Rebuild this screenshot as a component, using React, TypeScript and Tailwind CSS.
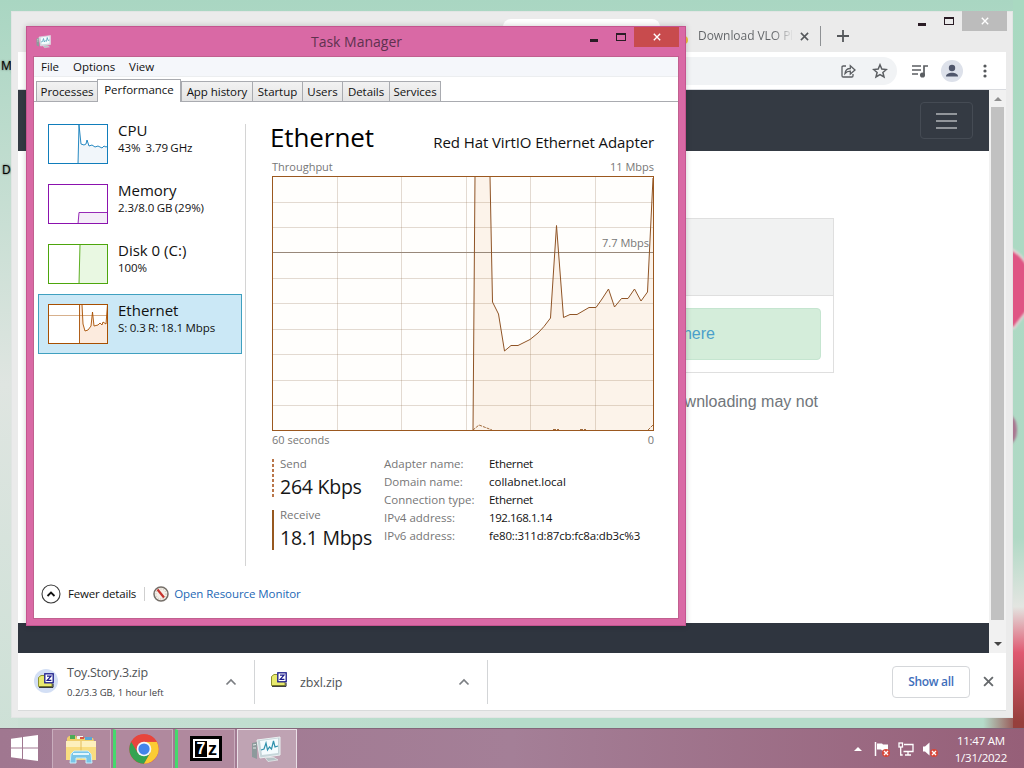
import type { ReactNode } from "react";

const THROUGHPUT =
  "201,254 203,0 218,0 220.5,126 226.5,138 232.5,175 239,169.5 246,169.5 258,163.5 266,157 272,150.5 278.5,142 284.5,49.5 291.5,141.5 298,138.5 305,138.5 317,131.5 324,131.5 330,123 336.5,113 342.5,131 349.5,122.5 356,122.5 362.5,113 369,125 375.5,116 381,2";

const tabs = [
  { name: "Processes", width: "w-[62px]" },
  { name: "Performance", width: "w-[84px]" },
  { name: "App history", width: "w-[72px]" },
  { name: "Startup", width: "w-[51px]" },
  { name: "Users", width: "w-[41px]" },
  { name: "Details", width: "w-[48px]" },
  { name: "Services", width: "w-[52px]" },
];

const adapterInfo = [
  { label: "Adapter name:", value: "Ethernet", spacing: "tracking-[-0.3px]" },
  { label: "Domain name:", value: "collabnet.local", spacing: "tracking-normal" },
  { label: "Connection type:", value: "Ethernet", spacing: "tracking-[-0.3px]" },
  { label: "IPv4 address:", value: "192.168.1.14", spacing: "tracking-[-0.45px]" },
  { label: "IPv6 address:", value: "fe80::311d:87cb:fc8a:db3c%3", spacing: "tracking-[-0.17px]" },
];

const resources = [
  {
    name: "CPU",
    detail: "43%  3.79 GHz",
    stroke: "#117dbb",
    fill: "#f1f6fa",
    points: "30,40 31,1 33,20 36,21 38,20 39,16 41,22 44,21 47,23 50,22 52,23 54,24 56,22 58,23 60,22",
  },
  {
    name: "Memory",
    detail: "2.3/8.0 GB (29%)",
    stroke: "#8b12ae",
    fill: "#f4ecf8",
    points: "30,40 31,28.5 60,28.5",
  },
  {
    name: "Disk 0 (C:)",
    detail: "100%",
    stroke: "#4da60c",
    fill: "#e9f8e2",
    points: "31,40 32,0.5 60,0.5",
  },
  {
    name: "Ethernet",
    detail: "S: 0.3 R: 18.1 Mbps",
    stroke: "#a74f01",
    fill: "#fcebde",
    points: "31.5,40 31.5,0.5 34,0.5 35,20 37,27 40,26 43,22 44.5,8 46,22 50,21 52,19 54,21 55,18 58,20 59.5,0.5",
    selected: true,
  },
];

function TaskManagerIcon({ className }: { className?: string }) {
  return (
    <svg viewBox="0 0 32 26" className={className}>
      <path d="M1 7l5-1v17l-5-2z" fill="#8d9a9c" />
      <path d="M2 9l3-.5M2 12h3" stroke="#e5eceb" />
      <path d="M6 4l23-3v18L9 22z" fill="#c6d6da" stroke="#eaf1f2" />
      <path d="M9 5l18-2.5v14.5L11 19z" fill="#f4fbfd" />
      <path d="M10 14l3-1 2-6 1.5 7 2-3 2 2 2-8 1.5 6 3-1" fill="none" stroke="#2f91ad" strokeWidth="1.2" />
      <path d="M14 21.5h9l4 2.5-10 1.5z" fill="#b5c3c6" stroke="#e8eeee" strokeWidth=".7" />
    </svg>
  );
}

function ZipIcon() {
  return (
    <svg viewBox="0 0 16 16" className="h-4 w-4">
      <path d="M.5 4.5L3 2.5h3l1 1h7v10H.5z" fill="#e8ea6e" stroke="#8d9130" />
      <path d="M1 14.3h14V11" fill="none" stroke="#111" />
      <rect x="6.8" y=".8" width="8.4" height="9" fill="#fff" stroke="#181889" strokeWidth="1.3" />
      <path d="M9 3.2h4L9.2 7.4h4.2" fill="none" stroke="#181889" strokeWidth="1.2" />
    </svg>
  );
}

function ChromeLogo() {
  return (
    <svg viewBox="0 0 48 48" className="h-[30px] w-[30px]">
      <circle cx="24" cy="24" r="23.5" fill="#e8453c" />
      <path d="M3.6 12.3A23.5 23.5 0 0 0 24 47.5l10.2-17.7L24 24H12z" fill="#34a351" />
      <path d="M44.4 12.3A23.5 23.5 0 0 1 24 47.5l10.2-17.7L24 12.3z" fill="#fbcc34" />
      <path d="M3.6 12.3A23.5 23.5 0 0 1 44.4 12.3H24L13.8 29.8z" fill="#e8453c" />
      <circle cx="24" cy="24" r="11.7" fill="#f5f7fb" />
      <circle cx="24" cy="24" r="9" fill="#4384ea" />
    </svg>
  );
}

function ExplorerIcon() {
  return (
    <svg viewBox="0 0 32 30" className="h-[30px] w-[32px]">
      <path d="M2 4l2-2h7l1 2h16l1 3v17H2z" fill="#efce6c" />
      <path d="M5 1h5v4H5z" fill="#4caa57" />
      <path d="M12 2h6v3h-6z" fill="#f7f5ed" />
      <path d="M15 3h4v2h-4z" fill="#d8554a" />
      <path d="M20 3h7v3h-7z" fill="#5ba6d4" />
      <path d="M1 7h30v19H1z" fill="#f9dd80" />
      <path d="M1 7h30v6H1z" fill="#fdf0bd" />
      <path d="M16 7v18" stroke="#e2bb59" />
      <path d="M5 29l1-9 3-3h14l3 3 1 9h-6v-5H11v5z" fill="#79c5e8" stroke="#caeefa" />
      <path d="M8 20h16" stroke="#e2f6fc" strokeWidth="2" />
    </svg>
  );
}

function Chevron() {
  return (
    <svg viewBox="0 0 12 8" className="h-2 w-3 shrink-0">
      <path d="M1.5 6.5L6 2l4.5 4.5" fill="none" stroke="#7b7e82" strokeWidth="1.7" />
    </svg>
  );
}

function Cross({ className }: { className?: string }) {
  return (
    <svg viewBox="0 0 10 10" className={className}>
      <path d="M1 1l8 8M9 1L1 9" fill="none" stroke="currentColor" strokeWidth="1.7" />
    </svg>
  );
}

function MiniGraph({ stroke, fill, points, line }: { stroke: string; fill: string; points: string; line?: boolean }) {
  return (
    <svg viewBox="0 0 60 40" className="h-10 w-[60px] shrink-0 bg-white">
      <polygon points={`${points} 60,40`} fill={fill} />
      {line && <path d="M0 11.5h60" stroke={stroke} strokeOpacity=".45" />}
      <polyline points={points} fill="none" stroke={stroke} strokeWidth=".9" />
      <rect x=".5" y=".5" width="59" height="39" fill="none" stroke={stroke} />
    </svg>
  );
}

function ThroughputChart() {
  return (
    <svg viewBox="0 0 382 255" className="block h-[255px] w-[382px] bg-[#fffefc]">
      <polygon points={`${THROUGHPUT} 381,254`} fill="#fcf3ea" />
      <path
        d="M65.5 0v255M129.5 0v255M194.5 0v255M258.5 0v255M323.5 0v255M0 26.5h382M0 51.5h382M0 102.5h382M0 127.5h382M0 153.5h382M0 178.5h382M0 204.5h382M0 229.5h382"
        stroke="#8f6f50"
        strokeOpacity=".25"
      />
      <path d="M0 76.5h382" stroke="#98887a" />
      <polyline points={THROUGHPUT} fill="none" stroke="#8f5426" />
      <path d="M201 254l6-5 13 5M281 253.5h6M308 253.5h6M376 254l5-5" fill="none" stroke="#a06a3c" strokeDasharray="3 1" />
      <rect x=".5" y=".5" width="381" height="254" fill="none" stroke="#9b581f" />
    </svg>
  );
}

function WindowButtons({ className, closeClass }: { className?: string; closeClass: string }) {
  return (
    <div className={`flex ${className ?? ""}`}>
      <div className="flex h-5 w-[27px] items-end justify-center pb-[5px]">
        <div className="h-[3px] w-2 bg-[#2a1c25]" />
      </div>
      <div className="flex h-5 w-[27px] items-center justify-center">
        <div className="h-2 w-[10px] border border-t-2 border-[#2a1c25]" />
      </div>
      <div className={`flex h-5 w-[45px] items-center justify-center text-white ${closeClass}`}>
        <Cross className="h-2 w-2" />
      </div>
    </div>
  );
}

function BrowserWindow() {
  return (
    <div className="absolute top-[11px] left-[11px] flex h-[707px] w-[1002px] flex-col border border-[#e2e5e4] bg-[#ebebeb] px-[6px] pb-[6px]">
      {/* Tab strip */}
      <div className="-mr-px flex h-10 shrink-0 justify-end">
        <div className="mt-[7px] h-[33px] w-[157px] rounded-t-lg bg-white" />
        <div className="-mr-[4px] mt-[8px] ml-[12px] flex h-4 w-[16px] items-center justify-end self-start pt-[20px]">
          <div className="h-2 w-2 rounded-full bg-[#f2c23b]" />
        </div>
        <div className="flex w-[125px] items-center justify-between pt-[8px] pl-[14px]">
          <div className="w-[94px] shrink-0 bg-linear-to-r from-[#606366] from-80% to-[#606366]/10 bg-clip-text text-[12px] tracking-[-0.05px] whitespace-nowrap text-transparent">
            Download VLO Pl
          </div>
          <Cross className="h-[9px] w-[9px] shrink-0 text-[#55585b]" />
        </div>
        <div className="mt-[14px] ml-[11px] h-5 w-px bg-[#8e9194]" />
        <svg viewBox="0 0 12 12" className="mt-[18px] ml-4 h-3 w-3">
          <path d="M6 0v12M0 6h12" stroke="#55585b" strokeWidth="1.8" />
        </svg>
        <WindowButtons className="-mt-px ml-[59px]" closeClass="bg-[#bcbcbc]" />
      </div>

      {/* Toolbar */}
      <div className="flex h-[38px] shrink-0 items-center justify-end border-b border-[#dadce0] bg-white text-[#5b5e62]">
        <div className="flex h-7 w-[860px] items-center justify-end gap-4 rounded-full bg-[#f1f3f5] pr-[9px]">
          <svg viewBox="0 0 16 16" className="h-4 w-4" fill="none" stroke="currentColor" strokeWidth="1.3">
            <path d="M6 3H3.2Q2 3 2 4.2v8.6Q2 14 3.2 14h8.6q1.2 0 1.2-1.2V11" />
            <path d="M5 10.5c.3-3 2-5 5.300-5V2.800L15 7l-4.700 4V8.200C7.700 8.200 6.200 9 5 10.5z" />
          </svg>
          <svg viewBox="0 0 16 16" className="h-4 w-4" fill="none" stroke="currentColor" strokeWidth="1.5">
            <path d="M8 1.800l1.800 4.300 4.600.4-3.500 3 1.100 4.500L8 11.600 4 14l1.100-4.500-3.500-3 4.600-.4z" />
          </svg>
        </div>
        <svg viewBox="0 0 17 14" className="ml-[14px] h-[14px] w-[17px]" fill="none" stroke="currentColor" strokeWidth="1.7">
          <path d="M1 2h9M1 6h9M1 10h6M13 11V2h4" />
          <circle cx="11.5" cy="11" r="1.7" fill="currentColor" />
        </svg>
        <svg viewBox="0 0 22 22" className="ml-[13px] h-[22px] w-[22px]">
          <circle cx="11" cy="11" r="11" fill="#dde1ea" />
          <circle cx="11" cy="8" r="3.2" fill="#4f566b" />
          <path d="M5 16.5c0-5 12-5 12 0z" fill="#4f566b" />
        </svg>
        <svg viewBox="0 0 4 14" className="mr-[19px] ml-5 h-[14px] w-1" fill="#55585b">
          <circle cx="2" cy="2" r="1.6" />
          <circle cx="2" cy="7" r="1.6" />
          <circle cx="2" cy="12" r="1.6" />
        </svg>
      </div>

      {/* Page */}
      <div className="flex h-[563px] shrink-0">
        <div className="flex w-[971px] flex-col bg-white font-['Liberation_Sans']">
          <div className="flex h-[61px] shrink-0 items-center justify-end bg-[#343a43] pr-4">
            <div className="flex h-[37px] w-[53px] flex-col items-center justify-center gap-[5px] rounded border border-[#454b54]">
              <div className="h-[2px] w-[21px] bg-[#92969b]" />
              <div className="h-[2px] w-[21px] bg-[#92969b]" />
              <div className="h-[2px] w-[21px] bg-[#92969b]" />
            </div>
          </div>
          <div className="mt-[67px] ml-[155px] h-[155px] w-[661px] border border-[#dfdfdf]">
            <div className="h-[77px] border-b border-[#dfdfdf] bg-[#f1f2f2]" />
            <div className="m-3 flex h-[52px] items-center justify-end rounded border border-[#c5e5d0] bg-[#d4edda] pr-[105px] text-[16px] text-[#4b9fca]">
              Click here
            </div>
          </div>
          <p className="mt-[17px] w-[800px] text-right text-[16px] leading-6 text-[#71767b]">Downloading may not</p>
          <div className="mt-auto h-[30px] bg-[#2f353f]" />
        </div>
        <div className="flex w-[17px] flex-col items-center bg-[#f1f1f1]">
          <div className="flex h-[17px] items-center">
            <div className="border-x-4 border-b-4 border-x-transparent border-b-[#8f8f8f]" />
          </div>
          <div className="h-[513px] w-[13px] bg-[#c1c1c1]" />
          <div className="flex h-[33px] items-end pb-[7px]">
            <div className="border-x-4 border-t-4 border-x-transparent border-t-[#454545]" />
          </div>
        </div>
      </div>

      {/* Download shelf */}
      <div className="flex h-[58px] shrink-0 items-center border-b border-[#d9dbdb] bg-white">
        <div className="flex h-[44px] w-[237px] items-center border-r border-[#d3d5d7] pr-[17px] pl-4">
          <div className="mt-[-2px] flex h-6 w-6 items-center justify-center rounded-full bg-[#d3dff5]">
            <ZipIcon />
          </div>
          <div className="mt-[2px] ml-[9px] flex-1">
            <div className="h-5 text-[12.5px] leading-5 tracking-[-0.25px] text-[#505356]">Toy.Story.3.zip</div>
            <div className="h-5 text-[9.5px] leading-5 text-[#3e4144]">0.2/3.3 GB, 1 hour left</div>
          </div>
          <Chevron />
        </div>
        <div className="flex h-[44px] w-[233px] items-center border-r border-[#d3d5d7] pr-[17px] pl-4">
          <div className="-mt-1">
            <ZipIcon />
          </div>
          <div className="mt-[3px] ml-[13px] flex-1 text-[12.5px] tracking-[-0.1px] text-[#505356]">zbxl.zip</div>
          <Chevron />
        </div>
        <div className="ml-auto flex h-8 w-[78px] items-center justify-center rounded border border-[#d5d7da] text-[12px] font-semibold tracking-[-0.3px] text-[#3f6fbb]">
          Show all
        </div>
        <Cross className="mr-3 ml-[13px] h-[11px] w-[11px] text-[#66696c]" />
      </div>
    </div>
  );
}

function Stat({ label, value, dashed }: { label: string; value: string; dashed?: boolean }) {
  return (
    <div className="flex h-10 whitespace-nowrap">
      <div
        className={`w-[2px] ${
          dashed ? "bg-[repeating-linear-gradient(to_bottom,#b9764a_0px,#b9764a_3px,transparent_3px,transparent_5px)]" : "bg-[#97581f]"
        }`}
      />
      <div className="pl-[6px]">
        <div className="-mt-1 h-[18px] text-[11.5px] leading-[18px] text-[#767676]">{label}</div>
        <div className="text-[19.5px] leading-7 tracking-[-0.25px] text-[#161616]">{value}</div>
      </div>
    </div>
  );
}

function TaskManager() {
  return (
    <div className="absolute top-[26px] left-[26px] flex h-[600px] w-[660px] flex-col border border-[#c4548f] bg-[#d969a5] px-[6px] pb-[6px] shadow-[0_0_6px_rgba(0,0,0,0.2)]">
      <div className="flex h-[29px] shrink-0">
        <TaskManagerIcon className="mt-[7px] ml-[3px] h-[15px] w-4" />
        <div className="mt-[5px] flex-1 pl-[81px] text-center text-[14px] leading-5 text-[#60314f]">Task Manager</div>
        <WindowButtons closeClass="bg-[#c84b4d]" />
      </div>

      <div className="flex flex-1 flex-col border border-[#c1608f] bg-white text-[11.5px] text-[#111]">
        {/* Menu */}
        <div className="flex h-[20px] shrink-0 items-center gap-[14px] border-b border-[#eceef0] bg-[#f5f7fb] pl-[7px] tracking-[-0.05px]">
          <span>File</span>
          <span>Options</span>
          <span>View</span>
        </div>

        {/* Tabs */}
        <div className="flex h-[25px] shrink-0 items-end border-b border-[#a9abb0] pl-[2px]">
          {tabs.map((tab) =>
            tab.name === "Performance" ? (
              <div key={tab.name} className={`${tab.width} -mb-px h-[23px] shrink-0 border border-b-0 border-[#a9abb0] bg-white text-center leading-[20px]`}>
                {tab.name}
              </div>
            ) : (
              <div
                key={tab.name}
                className={`${tab.width} -mr-px h-[20px] shrink-0 border border-b-0 border-[#a9abb0] bg-linear-to-b from-[#f2f2f2] to-[#e4e4e4] text-center leading-[20px] tracking-[-0.05px] last:mr-0`}
              >
                {tab.name}
              </div>
            ),
          )}
        </div>

        <div className="flex h-[464px] shrink-0">
          {/* Resource list */}
          <div className="mt-3 ml-[4px] w-[204px]">
            {resources.map((r) => (
              <div
                key={r.name}
                className={`flex h-[60px] border pt-[9px] pl-[9px] ${r.selected ? "border-[#3fa0c0] bg-[#cbe8f6]" : "border-transparent"}`}
              >
                <MiniGraph stroke={r.stroke} fill={r.fill} points={r.points} line={r.selected} />
                <div className="ml-[10px] -mt-[4px] whitespace-pre">
                  <div className="text-[15px] leading-5">{r.name}</div>
                  <div className="mt-px text-[11.5px] leading-[14px] tracking-[-0.05px] [word-spacing:-0.5px]">{r.detail}</div>
                </div>
              </div>
            ))}
          </div>
          <div className="mt-[22px] ml-[3px] h-[442px] w-px bg-[#d4d4d4]" />

          {/* Details pane */}
          <div className="ml-[26px] w-[382px]">
            <div className="mt-[18px] flex h-[38px] items-center justify-between">
              <h1 className="-mt-[4px] -ml-[2px] text-[26px] leading-9 tracking-[-0.1px] text-black">Ethernet</h1>
              <span className="pt-[7px] text-[15px] tracking-[-0.1px]">Red Hat VirtIO Ethernet Adapter</span>
            </div>
            <div className="flex h-[18px] items-center justify-between text-[11px] text-[#777]">
              <span>Throughput</span>
              <span>11 Mbps</span>
            </div>
            <div className="relative">
              <ThroughputChart />
              <span className="absolute top-[59px] right-[5px] text-[11px] leading-4 text-[#777]">7.7 Mbps</span>
            </div>
            <div className="flex h-[18px] items-center justify-between text-[11px] text-[#777]">
              <span>60 seconds</span>
              <span>0</span>
            </div>
            <div className="mt-[6px] flex">
              <div className="mt-[4px] flex w-[112px] flex-col gap-[11px]">
                <Stat label="Send" value="264 Kbps" dashed />
                <Stat label="Receive" value="18.1 Mbps" />
              </div>
              <div className="grid grid-cols-[105px_auto] content-start leading-[18px] whitespace-nowrap">
                {adapterInfo.map((info) => (
                  <Row key={info.label} label={info.label} spacing={info.spacing}>
                    {info.value}
                  </Row>
                ))}
              </div>
            </div>
          </div>
        </div>

        {/* Footer */}
        <div className="mt-4 flex h-6 items-center pl-[7px]">
          <svg viewBox="0 0 20 20" className="h-5 w-5" fill="none">
            <circle cx="10" cy="10" r="9" stroke="#3a3a3a" strokeWidth="1.1" />
            <path d="M6.5 12L10 8.5l3.5 3.5" stroke="#111" strokeWidth="1.8" />
          </svg>
          <span className="ml-[7px] tracking-[-0.2px]">Fewer details</span>
          <div className="ml-2 h-[14px] w-px bg-[#cfcfcf]" />
          <svg viewBox="0 0 16 16" className="ml-2 h-4 w-4">
            <circle cx="8" cy="8" r="7" fill="#f4efe8" stroke="#756f69" strokeWidth="1.5" />
            <circle cx="8" cy="8" r="5" fill="none" stroke="#c3b9ac" strokeDasharray="1 1.5" />
            <path d="M4.5 3.5l6.5 8" stroke="#c5322c" strokeWidth="2.2" />
          </svg>
          <span className="ml-[5px] tracking-[-0.07px] text-[#2368b5]">Open Resource Monitor</span>
        </div>
      </div>
    </div>
  );
}

function Row({ label, spacing, children }: { label: string; spacing: string; children: ReactNode }) {
  return (
    <>
      <span className="text-[#767676]">{label}</span>
      <span className={spacing}>{children}</span>
    </>
  );
}

function TaskbarButton({ running, active, children }: { running?: boolean; active?: boolean; children: ReactNode }) {
  return (
    <div
      className={`mr-[2px] flex h-10 w-[59.8px] shrink-0 items-center justify-center border ${
        active ? "border-[#eadfe6] bg-[#bfa3b3]" : "border-[#c9adbd] bg-[#b0899e]"
      } ${running ? "border-l-[3px] border-l-[#45d96c]" : ""}`}
    >
      {children}
    </div>
  );
}

function RedBadge() {
  return (
    <>
      <circle cx="12" cy="12" r="4" fill="#d8473a" />
      <path d="M10 10l4 4M14 10l-4 4" stroke="#fff" strokeWidth="1.3" />
    </>
  );
}

function Taskbar() {
  return (
    <div className="absolute inset-x-0 bottom-0 flex h-10 items-center border-t border-[#84667a] bg-linear-to-r from-[#a07790] via-[#a47f97] to-[#965f78]">
      <svg viewBox="0 0 27 26" className="-mt-px mr-[14px] ml-[10.5px] h-[26px] w-[27px] shrink-0" fill="#fff">
        <path d="M0 3.8l11-1.6v10.3H0zM12 2l15-2v12.5H12zM0 13.5h11v10.3L0 22.2zM12 13.5h15V26l-15-2z" />
      </svg>
      <TaskbarButton>
        <ExplorerIcon />
      </TaskbarButton>
      <TaskbarButton running>
        <ChromeLogo />
      </TaskbarButton>
      <TaskbarButton running>
        <div className="flex h-[25px] w-8 items-center justify-center border-[3px] border-black bg-white font-['Liberation_Sans'] text-[16px] leading-none font-bold">
          <span className="flex h-[16px] w-[12px] items-center justify-center bg-black text-white">7</span>
          <span className="ml-px text-[18px] text-black">z</span>
        </div>
      </TaskbarButton>
      <TaskbarButton active>
        <TaskManagerIcon className="h-[26px] w-8" />
      </TaskbarButton>

      {/* Tray */}
      <div className="mr-[17px] ml-auto flex items-center">
        <div className="border-x-4 border-b-4 border-x-transparent border-b-white" />
        <svg viewBox="0 0 16 16" className="ml-3 h-4 w-4">
          <path d="M1.5 1v14" stroke="#fff" strokeWidth="1.5" />
          <path d="M3 2.5h5l1 1h5v6H8l-1-1H3z" fill="#fff" />
          <RedBadge />
        </svg>
        <svg viewBox="0 0 16 16" className="ml-2 h-4 w-4" fill="none" stroke="#fff" strokeWidth="1.3">
          <path d="M6 3.5h9v7H5.5M10 11v3M7 14h6M2.7 6v8h2" />
          <rect x="1" y="2" width="3.5" height="4" />
        </svg>
        <svg viewBox="0 0 16 16" className="ml-2 h-4 w-4">
          <path d="M1 5.5h2L7.5 1.5v13L3 10.5H1z" fill="#fff" />
          <RedBadge />
        </svg>
        <div className="ml-[17px] text-center text-[11.5px] leading-[17px] tracking-[-0.25px] text-white">
          <div>11:47 AM</div>
          <div>1/31/2022</div>
        </div>
      </div>
    </div>
  );
}

export default function App() {
  return (
    <div className="relative h-[768px] w-[1024px] overflow-hidden bg-linear-to-b from-[#a9d6c2] via-[#dfe5e1] to-[#cbe0d5] font-['Open_Sans',sans-serif]">
      {/* Wallpaper */}
      <svg viewBox="0 0 1024 768" className="absolute inset-0 h-full w-full">
        <defs>
          <linearGradient id="side" x2="0" y2="1">
            <stop offset="0" stopColor="#a9d9c1" />
            <stop offset=".7" stopColor="#b0d9c5" />
            <stop offset=".79" stopColor="#e3e5e1" />
            <stop offset=".85" stopColor="#df5870" />
            <stop offset=".94" stopColor="#963f3c" />
          </linearGradient>
          <linearGradient id="ledge">
            <stop offset="0" stopColor="#cbe0d5" />
            <stop offset=".5" stopColor="#b5dcca" />
            <stop offset=".97" stopColor="#b5dcca" />
            <stop offset="1" stopColor="#9a5f5c" />
          </linearGradient>
          <filter id="soft">
            <feGaussianBlur stdDeviation="1" />
          </filter>
        </defs>
        <path d="M1013 0h11v768h-11z" fill="url(#side)" />
        <path d="M18 717h995v11H18z" fill="url(#ledge)" />
        <g filter="url(#soft)">
          <path d="M1008 248q12 4 20 18v44q-8 10-14 18h-6z" fill="#df5484" stroke="#e7d9dc" strokeWidth="2" />
          <path d="M1008 412q9 6 9 18t-9 16z" fill="#a97791" />
        </g>
      </svg>
      <span className="absolute top-[58px] left-[1px] text-[12px] leading-4 text-black [text-shadow:0_0_2px_#333]">My</span>
      <span className="absolute top-[162px] left-[2px] text-[12px] leading-4 text-black [text-shadow:0_0_2px_#333]">Do</span>
      <BrowserWindow />
      <TaskManager />
      <Taskbar />
    </div>
  );
}
